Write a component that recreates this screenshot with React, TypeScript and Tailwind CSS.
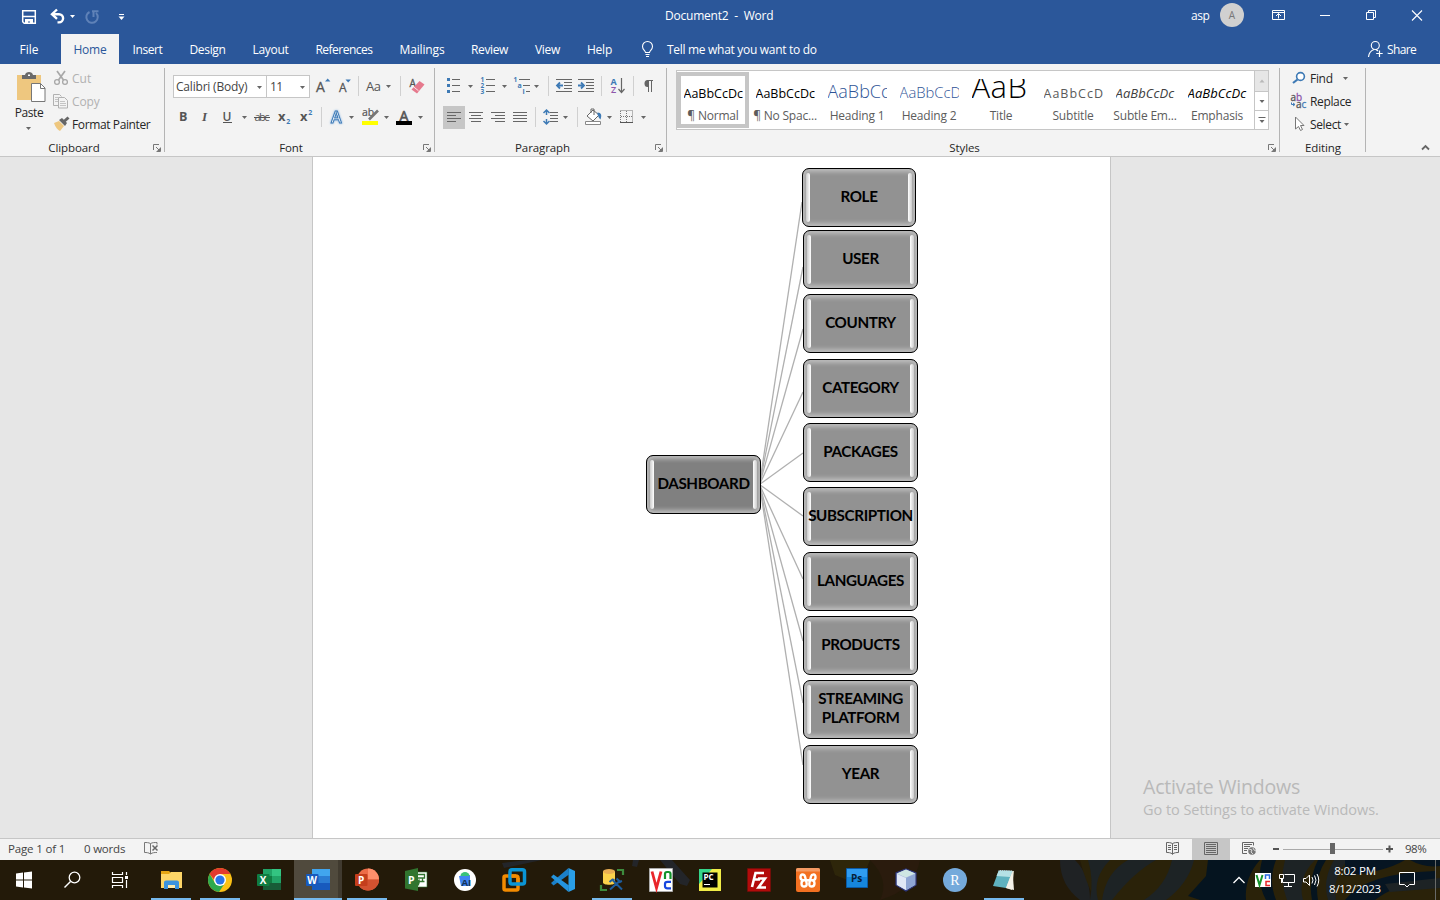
import React from "react";

type IcoProps = { x: number; y: number; w: number; h: number; children?: React.ReactNode };

const Ico = ({ x, y, w, h, children }: IcoProps) => (
  <svg width={w} height={h} viewBox={`${x} ${y} ${w} ${h}`} fill="none" className="block shrink-0">
    {children}
  </svg>
);

const Caret = ({ x, y, c = "#666" }: { x: number; y: number; c?: string }) => (
  <path d={`M${x - 2.5} ${y - 1.5}h5l-2.5 3z`} fill={c} />
);

const Sep = ({ x, y, h = 20 }: { x: number; y: number; h?: number }) => (
  <path d={`M${x + 0.5} ${y}v${h}`} stroke="#d0d0d0" />
);

const Lines = ({ rows, c = "#666" }: { rows: number[][]; c?: string }) => (
  <path d={rows.map(([x, y, w]) => `M${x} ${y + 0.5}h${w}`).join("")} stroke={c} />
);

const Launcher = () => (
  <svg width="8" height="8" viewBox="0 0 8 8" fill="none" className="block shrink-0">
    <path d="M.5 6V.5H6M3 3l3.5 3.5M7.5 3.5v4h-4" stroke="#777" />
    <path d="M7 4v3H4z" fill="#777" />
  </svg>
);

const sans = "font-['Open_Sans','Noto_Sans',sans-serif]";
const lbl = "whitespace-nowrap text-[12px] leading-[16px]";

/* ---------- title bar ---------- */

const TitleBar = () => (
  <div className="flex h-[34px] items-start text-white">
    <Ico x={0} y={0} w={140} h={32}>
      <path d="M22.700 10.700h12.600v12.600H24.200l-1.500-1.500z" stroke="#fff" strokeWidth="1.500" />
      <path d="M23 16.500h12" stroke="#fff" strokeWidth="1.500" />
      <path d="M25 19h8v5h-3v-2.500h-2V24h-3z" fill="#fff" />
      <path d="M52 14.200h7a4.100 4.100 0 0 1 0 8.200h-1.500" stroke="#fff" strokeWidth="2.400" />
      <path d="M57 9.500l-5 4.700 5 4.600" stroke="#fff" strokeWidth="2.400" />
      <Caret x={72.500} y={16.500} c="#fff" />
      <path d="M89.500 12a5.700 5.700 0 1 0 6.500 1M92 11.200h6.500M93.500 11v6" stroke="#5f82b8" strokeWidth="2" />
      <path d="M119 14.500h5" stroke="#fff" />
      <path d="M118.500 16.500h6l-3 3.400z" fill="#fff" />
    </Ico>
    <div className="flex h-[32px] flex-1 items-center justify-center">
      <span className={`${lbl} ml-[136px] w-[110px] whitespace-pre tracking-[-0.22px]`}>Document2  -  Word</span>
    </div>
    <div className="flex h-[32px] w-[276px] items-center">
      <span className={`${lbl} ml-[27px] w-[29px] tracking-[-0.4px]`}>asp</span>
      <div className="-mt-[2px] flex size-[24px] items-center justify-center rounded-full bg-[#d0d0d0] text-[10px] text-[#777]">A</div>
      <Ico x={1244} y={0} w={196} h={32}>
        <path d="M1272.500 10.500h12v9h-12zM1272.500 12.500h12M1278.500 18.500v-5M1276 16l2.500-2.500L1281 16" stroke="#fff" />
        <path d="M1320 15.500h10" stroke="#fff" />
        <path d="M1366.500 12.500h7v7h-7zM1368.500 12.500v-2h7v7h-2" stroke="#fff" />
        <path d="M1412 10.500l10 10M1422 10.500l-10 10" stroke="#fff" strokeWidth="1.100" />
      </Ico>
    </div>
  </div>
);

const tabs: [string, string, string][] = [
  ["Insert", "w-[57px]", "tracking-[-0.4px]"],
  ["Design", "w-[63px]", "tracking-[-0.35px]"],
  ["Layout", "w-[63px]", "tracking-[-0.3px]"],
  ["References", "w-[84px]", "tracking-[-0.5px]"],
  ["Mailings", "w-[72px]", "tracking-[-0.15px]"],
  ["Review", "w-[63px]", "tracking-[-0.35px]"],
  ["View", "w-[53px]", "tracking-[-0.3px]"],
  ["Help", "w-[51px]", "tracking-[-0.2px]"],
];

const TabRow = () => (
  <div className={`flex h-[30px] items-center text-white ${lbl}`}>
    <span className="w-[61px] pr-[3px] pt-px text-center">File</span>
    <span className="flex h-full w-[58px] items-center justify-center bg-[#f3f3f3] pt-px tracking-[-0.2px] text-[#2b579a]">Home</span>
    {tabs.map(([t, w, tr]) => (
      <span key={t} className={`${w} ${tr} pt-px text-center`}>{t}</span>
    ))}
    <Ico x={625} y={34} w={42} h={30}>
      <path d="M645.500 52.500c0-2-3-2.700-3-6a5 5 0 0 1 10 0c0 3.300-3 4-3 6zM645.500 54.500h4M646 56.500h3" stroke="#fff" strokeWidth="1.100" />
    </Ico>
    <span className="pt-px tracking-[-0.3px]">Tell me what you want to do</span>
    <div className="ml-auto flex w-[73px] items-center">
      <Ico x={1367} y={34} w={20} h={30}>
        <circle cx="1375.300" cy="45.500" r="4" stroke="#fff" strokeWidth="1.100" />
        <path d="M1368.500 57c.4-4 2.500-6.500 5.500-7.500M1376 49.500l2 1.500M1379.500 50.500v6.500M1376.200 53.500h6.500" stroke="#fff" strokeWidth="1.200" />
      </Ico>
      <span className="pt-px tracking-[-0.6px]">Share</span>
    </div>
  </div>
);

/* ---------- ribbon ---------- */

const GroupLabel = ({ text, pr, launcher = true }: { text: string; pr: string; launcher?: boolean }) => (
  <div className="flex h-[16px] items-center pr-[3px]">
    <span className={`flex-1 text-center text-[11.5px] leading-[16px] tracking-[-0.1px] text-[#262626] ${pr}`}>{text}</span>
    {launcher && <Launcher />}
  </div>
);

const groupBase = "flex h-[92px] shrink-0 flex-col";
const Divider = () => <div className="mt-[4px] h-[84px] w-px shrink-0 bg-[#b4b4b4]" />;

const Clipboard = () => (
  <div className={`${groupBase} w-[164px]`}>
    <div className="flex h-[76px]">
      <div className="flex w-[52px] flex-col pl-[6px]">
        <Ico x={6} y={64} w={46} h={41}>
          <path d="M17 75h24v25H17z" fill="#eec77f" />
          <path d="M22 79v-4h3c.5-4 7.500-4 8 0h3v4z" fill="#6a6a6a" />
          <path d="M28 74.500h2v1.500h-2z" fill="#fff" />
          <path d="M31.500 83.500h9l4.500 4.500v13.500H31.500z" fill="#fff" stroke="#777" />
          <path d="M40.500 83.500v5h4.500" stroke="#777" />
        </Ico>
        <span className={`${lbl} w-[46px] text-center tracking-[-0.4px] text-[#262626]`}>Paste</span>
        <Ico x={6} y={121} w={46} h={15}><Caret x={28.500} y={128.500} /></Ico>
      </div>
      <div className="flex flex-col pt-[3px]">
        <div className="flex h-[23px] items-center">
          <Ico x={52} y={67} w={20} h={23}>
            <path d="M57 71l6.500 9M65 71l-6.500 9" stroke="#a8a8a8" strokeWidth="1.700" />
            <circle cx="57" cy="82" r="2.400" stroke="#a8a8a8" strokeWidth="1.300" />
            <circle cx="65" cy="82" r="2.400" stroke="#a8a8a8" strokeWidth="1.300" />
          </Ico>
          <span className={`${lbl} text-[#b1b1b1]`}>Cut</span>
        </div>
        <div className="flex h-[23px] items-center">
          <Ico x={52} y={90} w={20} h={23}>
            <path d="M58 105.500h-4.500v-11h6l2 2M58.500 97.500h6l3 3v7.500h-9z" stroke="#b1b1b1" />
            <path d="M55 97.500h3M55 99.500h3M55 101.500h3M60 101.500h5M60 103.500h6M60 105.500h6" stroke="#c4c4c4" />
          </Ico>
          <span className={`${lbl} tracking-[-0.15px] text-[#b1b1b1]`}>Copy</span>
        </div>
        <div className="flex h-[23px] items-center">
          <Ico x={52} y={113} w={20} h={23}>
            <path d="M54 123l5-2 5 5-4 5c-2-1-5-4-6-8z" fill="#eec77f" />
            <path d="M59 120l3-2 5 5-2 3z" fill="#666" />
            <path d="M64 121.500l4.500-4" stroke="#666" strokeWidth="3" />
          </Ico>
          <span className={`${lbl} tracking-[-0.38px] text-[#262626]`}>Format Painter</span>
        </div>
      </div>
    </div>
    <GroupLabel text="Clipboard" pr="pr-[5px]" />
  </div>
);

const FontGroup = () => (
  <div className={`${groupBase} w-[269px]`}>
    <div className="flex h-[35px] items-start pl-[8px] pt-[11px]">
      <div className="flex h-[23px] w-[94px] items-center border border-[#c6c6c6] bg-white pl-[2px] text-[#444]">
        <span className={`${lbl} w-[80px] tracking-[-0.2px]`}>Calibri (Body)</span>
        <Ico x={256} y={80} w={8} h={12}><Caret x={259.500} y={86.500} /></Ico>
      </div>
      <div className="-ml-px flex h-[23px] w-[44px] items-center border border-[#c6c6c6] bg-white pl-[3px] text-[#444]">
        <span className={`${lbl} w-[28px] tracking-[-0.5px]`}>11</span>
        <Ico x={298} y={80} w={8} h={12}><Caret x={302.500} y={86.500} /></Ico>
      </div>
      <Ico x={310} y={75} w={48} h={23}>
        <text x="316" y="92" fontSize="14" fill="#555" stroke="#555" strokeWidth=".3">A</text>
        <path d="M325 81.500l2.700-3 2.700 3z" fill="#3e7ab5" />
        <text x="339" y="92" fontSize="12" fill="#555" stroke="#555" strokeWidth=".3">A</text>
        <path d="M345.500 79.500l2.700 3 2.700-3z" fill="#3e7ab5" />
      </Ico>
      <Ico x={358} y={75} w={42} h={23}>
        <Sep x={358} y={76} />
        <text x="366" y="91" fontSize="13" fill="#555" textLength="15">Aa</text>
        <Caret x={388.500} y={86.500} />
      </Ico>
      <Ico x={400} y={75} w={30} h={23}>
        <Sep x={400} y={76} />
        <text x="409.500" y="87" fontSize="10" fill="#555" stroke="#555" strokeWidth=".3">A</text>
        <path d="M411.500 89.500l8-8.500 5 3.500-7.500 9z" fill="#e6798d" />
        <path d="M413.500 86.800l5 4" stroke="#fff" strokeWidth=".8" />
      </Ico>
    </div>
    <div className="flex h-[41px] items-start pl-[7px]">
      <Ico x={172} y={99} w={80} h={36}>
        <text x="179" y="121" fontSize="12.500" fontWeight="700" fill="#555">B</text>
        <text x="202" y="121" fontSize="13" fontStyle="italic" fontFamily="Liberation Serif" fontWeight="700" fill="#555">I</text>
        <text x="222.500" y="120.500" fontSize="12" fontWeight="600" fill="#555">U</text>
        <path d="M223 122.500h9" stroke="#555" />
        <Caret x={244.500} y={117.500} />
      </Ico>
      <Ico x={252} y={99} w={69} h={36}>
        <text x="254.500" y="121" fontSize="11" fill="#555" textLength="15">abc</text>
        <path d="M254 117.500h16" stroke="#555" />
        <text x="278" y="121" fontSize="13" fontWeight="700" fill="#555">x</text>
        <text x="286.300" y="123.500" fontSize="7" fontWeight="700" fill="#3e7ab5">2</text>
        <text x="300" y="121" fontSize="13" fontWeight="700" fill="#555">x</text>
        <text x="308.300" y="115" fontSize="7" fontWeight="700" fill="#3e7ab5">2</text>
      </Ico>
      <Ico x={321} y={99} w={38} h={36}>
        <Sep x={321} y={107} />
        <text x="331" y="123" fontSize="16" fill="#fff" stroke="#3e7ab5" strokeWidth="1" fontWeight="600" className="[filter:drop-shadow(0_0_1px_#7fb0e4)]">A</text>
        <Caret x={351.500} y={117.500} />
      </Ico>
      <Ico x={359} y={99} w={36} h={36}>
        <text x="362" y="116" fontSize="10.500" fill="#555" stroke="#555" strokeWidth=".2">ab</text>
        <path d="M378 110.500l-9 9" stroke="#777" strokeWidth="2.600" />
        <path d="M362 121h16v4h-16z" fill="#ffff00" />
        <Caret x={386.500} y={117.500} />
      </Ico>
      <Ico x={395} y={99} w={36} h={36}>
        <text x="399.500" y="120.500" fontSize="14" fill="#555" stroke="#555" strokeWidth=".6">A</text>
        <path d="M396 121h16v4h-16z" fill="#000" />
        <Caret x={420.500} y={117.500} />
      </Ico>
    </div>
    <GroupLabel text="Font" pr="pr-[6px]" />
  </div>
);

const Paragraph = () => (
  <div className={`${groupBase} w-[231px]`}>
    <div className="flex h-[40px] items-start">
      <Ico x={435} y={64} w={40} h={40}>
        <path d="M447 78h3v3h-3zM447 84h3v3h-3zM447 90h3v3h-3z" fill="#3e7ab5" />
        <Lines rows={[[452, 79, 8], [452, 85, 8], [452, 91, 8]]} />
        <Caret x={470.500} y={86.500} />
      </Ico>
      <Ico x={475} y={64} w={36} h={40}>
        <text x="480.500" y="82" fontSize="6.500" fontWeight="700" fill="#3e7ab5">1</text>
        <text x="480.500" y="88" fontSize="6.500" fontWeight="700" fill="#3e7ab5">2</text>
        <text x="480.500" y="94" fontSize="6.500" fontWeight="700" fill="#3e7ab5">3</text>
        <Lines rows={[[486, 79, 9], [486, 85, 9], [486, 91, 9]]} />
        <Caret x={504.500} y={86.500} />
      </Ico>
      <Ico x={511} y={64} w={36} h={40}>
        <text x="513.500" y="82" fontSize="6.500" fontWeight="700" fill="#3e7ab5">1</text>
        <text x="517.500" y="88" fontSize="7" fontWeight="700" fill="#3e7ab5">a</text>
        <text x="522.500" y="94" fontSize="7" fontWeight="700" fill="#3e7ab5">i</text>
        <Lines rows={[[519, 79, 11], [523, 85, 7], [526, 91, 4]]} />
        <Caret x={536.500} y={86.500} />
      </Ico>
      <Ico x={547} y={64} w={54} h={40}>
        <Sep x={548} y={76} />
        <Lines rows={[[556, 79, 16], [564, 82, 8], [564, 85, 8], [564, 88, 8], [556, 91, 16], [578, 79, 16], [586, 82, 8], [586, 85, 8], [586, 88, 8], [578, 91, 16]]} />
        <path d="M563 85.500h-6M560 82.500l-3 3 3 3M578 85.500h6M581 82.500l3 3-3 3" stroke="#3e7ab5" strokeWidth="1.800" />
      </Ico>
      <Ico x={601} y={64} w={32} h={40}>
        <Sep x={601} y={76} />
        <text x="610.500" y="84.500" fontSize="9" fontWeight="700" fill="#3e7ab5">A</text>
        <text x="611" y="93" fontSize="9" fontWeight="600" fill="#8d57ab">Z</text>
        <path d="M621.500 78v14M618.500 89l3 3.500 3-3.500" stroke="#666" strokeWidth="1.200" />
      </Ico>
      <Ico x={633} y={64} w={24} h={40}>
        <Sep x={633} y={76} />
        <path d="M653 80.500h-6M648.500 80v12M651.500 80v12" stroke="#666" />
        <path d="M647.500 80a3 3.500 0 0 0 0 7h1v-7z" fill="#666" />
      </Ico>
    </div>
    <div className="flex h-[36px] items-start pl-[8px]">
      <div className="mt-[2px] flex h-[23px] w-[22px] items-start bg-[#c6c6c6]">
        <Ico x={443} y={106} w={22} h={23}>
          <Lines rows={[[447, 112, 14], [447, 115, 9], [447, 118, 14], [447, 121, 9]]} />
        </Ico>
      </div>
      <Ico x={465} y={104} w={70} h={26}>
        <Lines rows={[[469, 112, 14], [471, 115, 10], [469, 118, 14], [471, 121, 10]]} />
        <Lines rows={[[491, 112, 14], [495, 115, 10], [491, 118, 14], [495, 121, 10]]} />
        <Lines rows={[[513, 112, 14], [513, 115, 14], [513, 118, 14], [513, 121, 14]]} />
      </Ico>
      <Ico x={535} y={104} w={42} h={26}>
        <Sep x={535} y={107} />
        <path d="M546.500 110v5M546.500 119v5M543.500 113l3-3 3 3M543.500 121l3 3 3-3" stroke="#3e7ab5" strokeWidth="1.500" />
        <Lines rows={[[550, 112, 8], [550, 115, 8], [550, 118, 8], [550, 121, 8]]} />
        <Caret x={565.500} y={117.500} />
      </Ico>
      <Ico x={577} y={104} w={42} h={26}>
        <Sep x={577} y={107} />
        <path d="M587 116l6-6 6 5-6 6zM591 113v-4h3v6" stroke="#666" fill="#fff" />
        <path d="M597.500 112.500c4 0 4.500 3 3 7-1.500-1-2-3-3-5z" fill="#3e7ab5" />
        <path d="M585.500 121.500h15v3h-15z" fill="#fff" stroke="#888" />
        <Caret x={609.500} y={117.500} />
      </Ico>
      <Ico x={619} y={104} w={36} h={26}>
        <path d="M620.500 110.500h12v12h-12M626.500 111v11M621 116.500h11M620.500 111v12" stroke="#777" strokeDasharray="1 1" />
        <path d="M620 122.500h13" stroke="#555" />
        <Caret x={643.500} y={117.500} />
      </Ico>
    </div>
    <GroupLabel text="Paragraph" pr="pr-[5px]" />
  </div>
);

const styleItems: [string, string, string][] = [
  ["AaBbCcDc", "¶ Normal", "text-[12.5px] text-black"],
  ["AaBbCcDc", "¶ No Spac...", "text-[12.5px] text-black"],
  ["AaBbCc", "Heading 1", "text-[18px] font-light text-[#2f5496]"],
  ["AaBbCcD", "Heading 2", "text-[14.8px] font-light text-[#2f5496]"],
  ["AaB", "Title", "text-[31px] font-light tracking-[0.5px] text-black"],
  ["AaBbCcD", "Subtitle", "text-[12.5px] tracking-[1px] text-[#5a5a5a]"],
  ["AaBbCcDc", "Subtle Em...", "text-[13px] italic tracking-[0.1px] text-[#404040]"],
  ["AaBbCcDc", "Emphasis", "text-[13px] italic tracking-[0.1px] text-black"],
];

const Styles = () => (
  <div className={`${groupBase} w-[612px]`}>
    <div className="flex h-[76px] pl-[9px] pt-[6px]">
      <div className="flex h-[60px] w-[593px] border border-[#c6c6c6] bg-white">
        <div className="flex w-[577px] pt-px">
          {styleItems.map(([p, n, c], i) => (
            <div key={n} className={`flex h-[56px] w-[72px] shrink-0 flex-col items-center border-4 ${i === 0 ? "border-[#c6c6c6]" : "border-transparent"}`}>
              <div className="mt-[3px] flex h-[25px] w-[59px] items-start overflow-hidden">
                <div className={`flex h-[25px] items-baseline whitespace-nowrap leading-[1] ${c}`}>
                  <span className="inline-block h-[19px] w-0" />
                  <span className={n === "Title" ? "-mt-[9px]" : ""}>{p}</span>
                </div>
              </div>
              <span className={`${lbl} mt-[6px] tracking-[-0.2px] text-[#5c5c5c]`}>{n}</span>
            </div>
          ))}
        </div>
        <div className="flex w-[14px] flex-col border-l border-[#c6c6c6]">
          <div className="h-[20px] bg-[#e6e6e6]">
            <Ico x={0} y={0} w={13} h={20}><path d="M4.500 11.500h5l-2.500-3z" fill="#b8b8b8" /></Ico>
          </div>
          <div className="h-[19px] border-t border-[#c6c6c6]">
            <Ico x={0} y={0} w={13} h={18}><Caret x={7} y={9.500} /></Ico>
          </div>
          <div className="h-[19px] border-t border-[#c6c6c6]">
            <Ico x={0} y={0} w={13} h={18}><path d="M3.500 6.500h7" stroke="#666" /><Caret x={7} y={10.500} /></Ico>
          </div>
        </div>
      </div>
    </div>
    <GroupLabel text="Styles" pr="pr-[6px]" />
  </div>
);

const Editing = () => (
  <div className={`${groupBase} w-[85px]`}>
    <div className={`flex h-[76px] flex-col pl-[8px] pt-[3px] text-[#262626] ${lbl}`}>
      <div className="flex h-[23px] items-center">
        <Ico x={1288} y={67} w={22} h={23}>
          <circle cx="1300.500" cy="76.500" r="3.900" fill="#fff" stroke="#3e7ab5" strokeWidth="1.600" />
          <path d="M1297.500 79.500l-4.500 3.500" stroke="#3e7ab5" strokeWidth="2.200" />
        </Ico>
        <span className="w-[28px] tracking-[-0.3px]">Find</span>
        <Ico x={1338} y={67} w={16} h={23}><Caret x={1345.500} y={78.500} /></Ico>
      </div>
      <div className="flex h-[23px] items-center">
        <Ico x={1288} y={90} w={22} h={23}>
          <text x="1290.500" y="100.500" fontSize="10" fill="#555" stroke="#555" strokeWidth=".3">a<tspan fill="#8d57ab" stroke="#8d57ab">b</tspan></text>
          <text x="1296" y="108" fontSize="10" fill="#555" stroke="#555" strokeWidth=".3">a<tspan fill="#3e7ab5" stroke="#3e7ab5">c</tspan></text>
          <path d="M1291.500 102.500v2h3M1293 103l2 1.500-2 1.500" stroke="#3e7ab5" />
        </Ico>
        <span className="tracking-[-0.35px]">Replace</span>
      </div>
      <div className="flex h-[23px] items-center">
        <Ico x={1288} y={113} w={22} h={23}>
          <path d="M1295.500 117v12l3-2.500 2 4 2-1-2-4h3.500z" fill="#fff" stroke="#777" />
        </Ico>
        <span className="w-[32px] tracking-[-0.35px]">Select</span>
        <Ico x={1342} y={113} w={10} h={23}><Caret x={1346.500} y={124.500} /></Ico>
      </div>
    </div>
    <GroupLabel text="Editing" pr="pl-[4px]" launcher={false} />
  </div>
);

const Ribbon = () => (
  <div className="flex h-[93px] border-b border-[#c6c6c6] bg-[#f3f3f3]">
    <Clipboard />
    <Divider />
    <FontGroup />
    <Divider />
    <Paragraph />
    <Divider />
    <Styles />
    <Divider />
    <Editing />
    <Divider />
    <div className="flex flex-1 items-end justify-end pb-[5px] pr-[10px]">
      <Ico x={0} y={0} w={9} h={7}><path d="M1 5.500l3.500-3.500L8 5.500" stroke="#666" strokeWidth="1.800" /></Ico>
    </div>
  </div>
);

/* ---------- document ---------- */

type NodeProps = { text: string; pos: string; end?: [number, number]; dark?: boolean };

const nodes: NodeProps[] = [
  { text: "ROLE", pos: "left-[489px] top-[11px] w-[114px]", end: [489, 45] },
  { text: "USER", pos: "left-[490px] top-[73px] w-[115px]", end: [490, 110] },
  { text: "COUNTRY", pos: "left-[490px] top-[137px] w-[115px]", end: [490, 172] },
  { text: "CATEGORY", pos: "left-[490px] top-[202px] w-[115px]", end: [490, 235] },
  { text: "PACKAGES", pos: "left-[490px] top-[266px] w-[115px]", end: [490, 296] },
  { text: "SUBSCRIPTION", pos: "left-[490px] top-[330px] w-[115px]", end: [490, 359] },
  { text: "LANGUAGES", pos: "left-[490px] top-[395px] w-[115px]", end: [490, 422] },
  { text: "PRODUCTS", pos: "left-[490px] top-[459px] w-[115px]", end: [490, 484] },
  { text: "STREAMING PLATFORM", pos: "left-[490px] top-[523px] w-[115px]", end: [490, 546] },
  { text: "YEAR", pos: "left-[490px] top-[588px] w-[115px]", end: [490, 608] },
  { text: "DASHBOARD", pos: "left-[333px] top-[298px] w-[115px]", dark: true },
];

const DiagramNode = ({ text, pos, dark }: NodeProps) => (
  <div className={`absolute flex h-[59px] items-stretch justify-between rounded-[7px] border border-black px-[3px] py-[4px] shadow-[inset_0_0_4px_3px_#bcbcbc] ${pos} ${dark ? "bg-[#808080]" : "bg-[#929292]"}`}>
    <div className="w-[4px] shrink-0 rounded-[4px] bg-gradient-to-r from-[#cccccc] to-white" />
    <div className="relative -mx-[8px] flex flex-1 items-center justify-center pb-[3px] text-center font-['Lato','Open_Sans',sans-serif] text-[15.2px] font-bold leading-[19px] tracking-[-0.38px] text-black">
      <span className="px-[4px]">{text}</span>
    </div>
    <div className="w-[4px] shrink-0 rounded-[4px] bg-gradient-to-l from-[#cccccc] to-white" />
  </div>
);

const Document = () => (
  <div className="relative flex h-[681px] justify-center overflow-hidden bg-[#e6e6e6] pr-[17px]">
    <div className="relative w-[799px] border-x border-[#c6c6c6] bg-white">
      <svg width="797" height="681" viewBox="0 0 797 681" className="absolute left-0 top-0">
        {nodes.filter((n) => n.end).map((n) => (
          <path key={n.text} d={`M446.500 327.500L${n.end![0]} ${n.end![1]}`} stroke="#b0b0b0" strokeWidth="1.300" />
        ))}
      </svg>
      {nodes.map((n) => <DiagramNode key={n.text} {...n} />)}
    </div>
    <div className="absolute left-[1143px] top-[616px] text-[#b9b9b9]">
      <div className="whitespace-nowrap text-[19.5px] leading-[27px] tracking-[-0.18px]">Activate Windows</div>
      <div className="whitespace-nowrap text-[14.5px] leading-[20px] tracking-[-0.05px]">Go to Settings to activate Windows.</div>
    </div>
  </div>
);

/* ---------- status bar ---------- */

const StatusBar = () => (
  <div className={`flex h-[22px] items-center border-t border-[#c6c6c6] bg-[#f3f3f3] text-[#444] ${lbl}`}>
    <span className="mb-[2px] ml-[8px] w-[76px] text-[11.5px] tracking-[-0.15px]">Page 1 of 1</span>
    <span className="mb-[2px] w-[56px] text-[11.5px] tracking-[-0.2px]">0 words</span>
    <Ico x={140} y={839} w={24} h={21}>
      <path d="M150.500 843.500c-2-1-4-1-6-1v10c2 0 4 0 6 1.500zM150.500 843.500c2-1 4-1 6.500-1v2M150.500 854c2-1.500 4-1.500 6.500-1.500" stroke="#777" />
      <path d="M152.500 845.500l5 5M157.500 845.500l-5 5" stroke="#666" strokeWidth="1.500" />
    </Ico>
    <div className="ml-auto flex h-full w-[284px] items-center">
      <Ico x={1156} y={839} w={36} h={21}>
        <path d="M1172.500 843.500c-2-1-4-1-6-1v10c2 0 4 0 6 1.500 2-1.500 4-1.500 6-1.500v-10c-2 0-4 0-6 1zM1172.500 843.500v11" stroke="#666" />
        <Lines rows={[[1168, 845, 3], [1168, 847, 3], [1168, 849, 3], [1174, 845, 3], [1174, 847, 3], [1174, 849, 3]]} />
      </Ico>
      <div className="h-full w-[38px] bg-[#c6c6c6]">
        <Ico x={1192} y={839} w={38} h={21}>
          <path d="M1204.500 842.500h13v12h-13z" stroke="#666" />
          <Lines rows={[[1206, 844, 10], [1206, 846, 10], [1206, 848, 10], [1206, 850, 10], [1206, 852, 10]]} />
        </Ico>
      </div>
      <Ico x={1230} y={839} w={38} h={21}>
        <path d="M1247 853.500h-4.500v-11h11v3" stroke="#666" />
        <Lines rows={[[1244, 844, 8], [1244, 846, 6], [1244, 848, 4], [1244, 850, 3]]} />
        <circle cx="1252" cy="851" r="3.800" fill="#777" />
        <path d="M1249 849l3 1-1 2 2 2M1253 848l1 2 2 1" stroke="#f3f3f3" strokeWidth=".8" />
      </Ico>
      <Ico x={1268} y={839} w={130} h={21}>
        <path d="M1273 849h6M1386 849h7M1389.500 845.500v7" stroke="#555" strokeWidth="2" />
        <path d="M1283 849.500h100" stroke="#aaa" />
        <path d="M1330 843h5v11h-5z" fill="#666" />
      </Ico>
      <span className="mb-[2px] ml-[7px] text-[11.5px] tracking-[-0.5px]">98%</span>
    </div>
  </div>
);

/* ---------- taskbar ---------- */

const Office = ({ letter, dark, tiles }: { letter: string; dark: string; tiles: string[] }) => (
  <>
    <path d="M6 1h10v7H6z" fill={tiles[0]} />
    <path d="M15 1h9v7h-9z" fill={tiles[1]} />
    <path d="M6 8h9v7H6z" fill={tiles[2]} />
    <path d="M15 8h9v7h-9z" fill={tiles[3]} />
    <path d="M6 15h18v7H6z" fill={tiles[4]} />
    <rect y="6" width="12.500" height="12" rx="1" fill={dark} />
    <text x="6.200" y="15.700" textAnchor="middle" fontSize="10" fontWeight="700" fill="#fff">{letter}</text>
  </>
);

const apps: { name: string; bar?: string; art: React.ReactNode }[] = [
  {
    name: "explorer", bar: "w-[40px]", art: (
      <>
        <path d="M2 3h8l2 2h11v15H2z" fill="#e5a614" />
        <path d="M2 6h8l2-2h11v16H2z" fill="#fdd667" />
        <path d="M5 14.500q0-2 2-2h11q2 0 2 2V21h-4v-4H9v4H5z" fill="#3b93dd" />
        <path d="M9 17h7v3H9z" fill="#fde9a9" />
      </>
    ),
  },
  {
    name: "chrome", bar: "w-[40px]", art: (
      <>
        <circle cx="12" cy="12" r="12" fill="#fbc116" />
        <path d="M1.600 6a12 12 0 0 1 20.800 0H12L8 14z" fill="#e33b2e" />
        <path d="M1.600 6a12 12 0 0 0 9.400 18l6-9-5 2-5-2z" fill="#2da94f" />
        <circle cx="12" cy="12" r="6" fill="#fff" />
        <circle cx="12" cy="12" r="4.600" fill="#2a75e8" />
      </>
    ),
  },
  { name: "excel", art: <Office letter="X" dark="#107c41" tiles={["#21a366", "#33c481", "#107c41", "#21a366", "#185c37"]} /> },
  { name: "word", art: <Office letter="W" dark="#185abd" tiles={["#41a5ee", "#41a5ee", "#2b7cd3", "#2b7cd3", "#185abd"]} /> },
  {
    name: "powerpoint", bar: "w-[40px]", art: (
      <>
        <circle cx="13" cy="11.500" r="11" fill="#ed6c47" />
        <path d="M13 .5a11 11 0 0 1 11 11H13z" fill="#ff8f6b" />
        <path d="M2 11.500h22a11 11 0 0 1-22 0z" fill="#d35230" />
        <rect y="6" width="12.500" height="12" rx="1" fill="#c43e1c" />
        <text x="6.200" y="15.700" textAnchor="middle" fontSize="10" fontWeight="700" fill="#fff">P</text>
      </>
    ),
  },
  {
    name: "project", art: (
      <>
        <path d="M13 4h10v15H13z" fill="#fff" stroke="#31752f" strokeWidth=".6" />
        <path d="M1 3l13-3v23L1 20.500z" fill="#31752f" />
        <text x="4" y="15.500" fontSize="10.500" fontWeight="700" fill="#fff">P</text>
        <path d="M14 6.500h6.500V10H14M18.500 13.500V10M20.500 13.500h-6v4M15.500 11.500l-1.500 2 1.500 2" stroke="#31752f" strokeWidth="1.300" />
      </>
    ),
  },
  {
    name: "android", art: (
      <>
        <circle cx="12" cy="12" r="11" fill="#fff" />
        <path d="M6 8l11-1v11H8z" fill="#4285f4" />
        <path d="M7.500 8a4.500 4 0 0 1 9 0z" fill="#3ac27c" />
        <text x="8.500" y="17.500" fontSize="9.500" fontWeight="700" fill="#143358">AI</text>
      </>
    ),
  },
  {
    name: "vmware", art: (
      <>
        <path d="M14 8H3.500Q2 8 2 9.500v11Q2 22 3.500 22h11q1.500 0 1.500-1.500V10" stroke="#f38b00" strokeWidth="3.500" />
        <rect x="8" y="1.700" width="14.500" height="14.300" rx="2" stroke="#0b95d5" strokeWidth="3.500" />
        <path d="M9.500 8H14q2 0 2 2v4" stroke="#f38b00" strokeWidth="3.500" />
      </>
    ),
  },
  {
    name: "vscode", art: (
      <>
        <path d="M17.500 0v24l6.500-3V3z" fill="#2a9fe8" />
        <path d="M17.500 0L0 15l2.500 2.500L18 6.500z" fill="#1b80c9" />
        <path d="M17.500 24L0 9l2.500-2.500L18 17.500z" fill="#2493dd" />
      </>
    ),
  },
  {
    name: "ssms", bar: "w-[40px]", art: (
      <>
        <path d="M17 2h6v5M1 17v5h6" stroke="#3d8b3d" strokeWidth="2.200" />
        <path d="M3 3.500v11c0 3 12 3 12 0v-11z" fill="#fbd24b" />
        <ellipse cx="9" cy="3.500" rx="6" ry="2.500" fill="#e9ae53" />
        <path d="M10 21.500l9-8M13 12.500l9 9M16.500 10.500l4.500 4M9.500 14l3-2.500 2 .5M18 14.500l4-1.500" stroke="#1d5c9d" strokeWidth="2" />
      </>
    ),
  },
  {
    name: "vnc", art: (
      <>
        <path d="M.5.5h23v23H.5z" fill="#fff" stroke="#aaa" />
        <path d="M3 3.500L7.500 20 12 3.500" stroke="#e9262b" strokeWidth="2.800" />
        <path d="M16 11V6q0-2 2-2h1.500q2 0 2 2v5" stroke="#15932c" strokeWidth="2.200" />
        <path d="M22 13.800h-3.500q-2.500 0-2.500 2v2.500q0 2 2.500 2H22" stroke="#1646df" strokeWidth="2.200" />
      </>
    ),
  },
  {
    name: "pycharm", art: (
      <>
        <path d="M1 1h22v22H1z" fill="#f1ec47" />
        <path d="M1 1h13L1 16z" fill="#35d58a" />
        <path d="M4.500 4.500h15v15h-15z" fill="#000" />
        <text x="5.500" y="11.800" fontSize="8" fontWeight="700" fill="#fff">PC</text>
        <path d="M6 16.500h6" stroke="#fff" />
      </>
    ),
  },
  {
    name: "filezilla", art: (
      <>
        <path d="M.5.5h23v23H.5z" fill="#b30b0b" stroke="#7b0a0a" strokeDasharray="1 1" />
        <path d="M5 19L8.500 5H17M7 11.500h6M11 10.500h7L11.500 19.500H19" stroke="#fff" strokeWidth="2.600" />
      </>
    ),
  },
  {
    name: "xampp", art: (
      <>
        <rect width="24" height="24" rx="2" fill="#f37021" />
        <path d="M0 2q0-2 2-2h20q2 0 2 2v1.500H0z" fill="#f59a63" />
        <path d="M6.500 6.500q-2 0-2 2.800t2.500 2.900h10q2.500 0 2.500-2.900t-2-2.800-2.500 2l-1.500 6q-1 4 2 4t3-3-2.500-3.300h-8q-2.500 0-2.500 3.300t3 3 2-4l-1.500-6q-.500-2-2.500-2z" stroke="#fff" strokeWidth="2.400" />
      </>
    ),
  },
  {
    name: "photoshop", art: (
      <>
        <path d="M1.500.5h21v19h-21z" fill="#1686dc" stroke="#0a5aa5" />
        <path d="M2 1h20v8H2z" fill="#2f9cf0" />
        <text x="6" y="14" fontSize="10" fontWeight="700" fill="#061e38">Ps</text>
      </>
    ),
  },
  {
    name: "netbeans", art: (
      <>
        <path d="M12 1l10 4v12l-10 6L2 17V5z" fill="#a9b9da" stroke="#2c3478" strokeWidth="1.200" />
        <path d="M12 1.500l9 4-9 4-9-4z" fill="#cfe6e3" />
        <path d="M3 6l9 4v12l-9-5z" fill="#e0e8f6" />
        <path d="M12 10l9-4v11l-9 5z" fill="#8fa6d4" />
      </>
    ),
  },
  {
    name: "rstudio", art: (
      <>
        <circle cx="12" cy="12" r="12" fill="#75aadb" />
        <text x="12" y="16.500" textAnchor="middle" fontSize="14" fontFamily="Liberation Serif" fill="#fff">R</text>
      </>
    ),
  },
  {
    name: "notepad", bar: "w-[40px]", art: (
      <>
        <path d="M7 2l15 1-2 19-6-2z" fill="#d9d6c6" />
        <path d="M7 2l13.500 1L14 20 1 18z" fill="#5fb2bf" />
        <path d="M7 2l13.500 1-2.500 6L4.500 8z" fill="#b5e1e5" />
        <path d="M14 20l6.500-17L22 22z" fill="#f3f1e8" />
        <path d="M7 2.500h14" stroke="#888" strokeDasharray="1 1" />
      </>
    ),
  },
];

const Taskbar = () => (
  <div className="relative flex h-[40px] overflow-hidden bg-[#231a09]">
    <svg width="960" height="40" viewBox="480 0 960 40" className="absolute right-0 top-0" fill="none">
      <path d="M502 3l25-3h15l-38 8zM633 0h6l-2 7-5-1zM660 0h12l18 20-3 6-7-2z" fill="#232529" />
      <path d="M830 0h40l-10 25-25-10z" fill="#2e260a" />
      <path d="M870 0h50q-5 30-40 40 10-20-10-40z" fill="#2a1b0d" />
      <path d="M1060 0q0 25 20 40h10q0-25-15-40z" fill="#1f2224" />
      <path d="M1080 0h360v40h-345q-10-20-15-40z" fill="#2a2209" />
      <path d="M1088 0h22q-18 18-12 40h-8q4-20-2-40zM1128 0h28q-22 12-44 40h-10q4-28 26-40zM1172 0h22q-6 24-28 40h-22q22-14 28-40z" fill="#1d2325" />
      <path d="M1208 0h52q-16 18-14 40h-46l-12-4 18-20z" fill="#05141f" />
      <path d="M1285 0h30q-18 18-12 40h-16q-8-20-2-40zM1334 0h14q-16 16-12 40h-8q-6-20 6-40z" fill="#1d2325" />
      <path d="M1262 0h14q-8 20 0 40h-10q-10-18-4-40zM1318 0h8q-12 18-8 40h-6q-4-20 6-40z" fill="#05141f" />
      <path d="M1345 40q20-27 90-29v8q-40 5-60 21zM1345 0h60q-20 12-60 16zM1410 0h30v6q-16 2-30-6z" fill="#061522" />
      <path d="M1385 24l55-6v10l-50 4z" fill="#1d2325" />
    </svg>
    <div className="relative flex w-full">
      <Ico x={0} y={860} w={146} h={40}>
        <path d="M16 873.500l7-1v7h-7zM24 872.400l8-1v8.100h-8zM16 880.500h7v7l-7-1zM24 880.500h8v8.100l-8-1z" fill="#fff" />
        <circle cx="74.500" cy="877.500" r="5.300" stroke="#fff" strokeWidth="1.300" />
        <path d="M70.500 881.500l-6 6" stroke="#fff" strokeWidth="1.500" />
        <path d="M112.500 872v2.500h10V872M112.500 888v-2.500h10v2.500M112.500 877.500h10v5h-10zM126.500 872v3M126.500 880v8" stroke="#fff" strokeWidth="1.200" />
        <path d="M125 876h3v3h-3z" fill="#fff" />
      </Ico>
      {apps.map((a) => (
        <div key={a.name} className={`relative flex h-[40px] w-[49px] shrink-0 items-center justify-center ${a.name === "word" ? "border-l border-r-4 border-l-[#231a09] border-r-[#403a2f] bg-[#504a3d] pl-[3px]" : ""}`}>
          <svg width="24" height="24" viewBox="0 0 24 24" fill="none" className="block overflow-visible">{a.art}</svg>
          {a.bar && <div className={`absolute bottom-0 h-[2px] bg-[#76b9ed] ${a.bar}`} />}
          {a.name === "word" && <div className="absolute -right-[4px] bottom-0 left-0 h-[2px] bg-[#76b9ed]" />}
        </div>
      ))}
      <div className={`ml-auto flex text-white ${lbl}`}>
        <Ico x={1228} y={860} w={92} h={40}>
          <path d="M1233.500 883l5.500-5.500 5.500 5.500" stroke="#fff" strokeWidth="1.300" />
          <path d="M1255 873h16v14h-16z" fill="#fff" />
          <path d="M1256.500 875l3 10 3-10" stroke="#15932c" strokeWidth="2" />
          <path d="M1265.500 879v-4h4v4" stroke="#2b6ce5" strokeWidth="1.500" />
          <path d="M1270 881.500h-4v4h4" stroke="#e9262b" strokeWidth="1.500" />
          <path d="M1284.500 874.500h10v8h-12v-4M1288.500 883v3.500M1284 886.500h8M1279.500 874.500h4v4h-4zM1281.500 878v5" stroke="#fff" />
          <path d="M1303.500 878.500h2.500l3.500-3.500v10.500l-3.500-3.500h-2.500zM1312 877q2 3 0 6.500M1314.500 875.500q3 4.500 0 9.500M1317 874q3.500 6 0 12.500" stroke="#fff" />
        </Ico>
        <div className="flex w-[70px] flex-col items-center pt-[2px] text-[11.5px] leading-[18px]">
          <span className="tracking-[-0.2px]">8:02 PM</span>
          <span className="tracking-[-0.3px]">8/12/2023</span>
        </div>
        <Ico x={1390} y={860} w={50} h={40}>
          <path d="M1399.500 872.500h15v12h-5l-2.500 2.500-2.500-2.500h-5z" stroke="#fff" />
          <path d="M1435.500 860v40" stroke="#686a68" />
        </Ico>
      </div>
    </div>
  </div>
);

export default function App() {
  return (
    <div className={`flex h-[900px] w-[1440px] flex-col overflow-hidden ${sans}`}>
      <div className="bg-[#2b579a]">
        <TitleBar />
        <TabRow />
      </div>
      <Ribbon />
      <Document />
      <StatusBar />
      <Taskbar />
    </div>
  );
}
